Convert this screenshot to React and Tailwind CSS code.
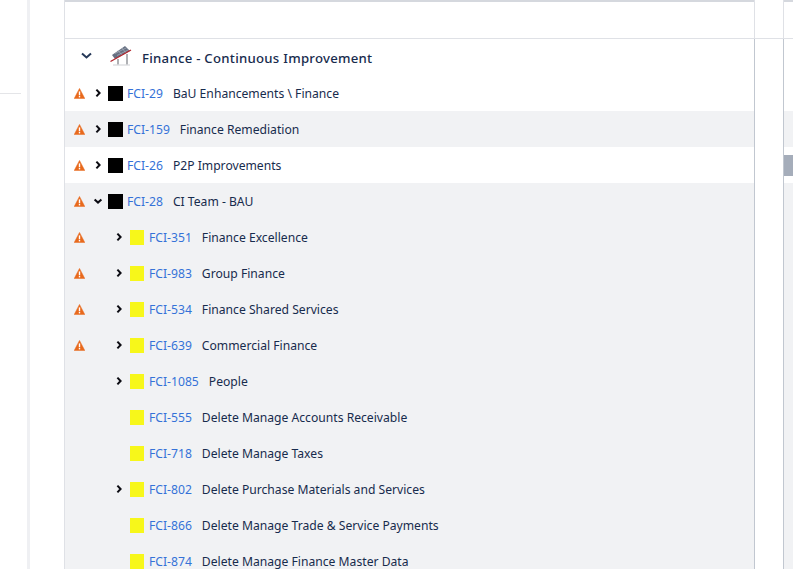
import React from 'react';

const rows = [
  { id: 'FCI-29', name: 'BaU Enhancements \\ Finance', warn: true, open: false, level: 0, bg: 'white' },
  { id: 'FCI-159', name: 'Finance Remediation', warn: true, open: false, level: 0, bg: 'gray' },
  { id: 'FCI-26', name: 'P2P Improvements', warn: true, open: false, level: 0, bg: 'white', mark: true },
  { id: 'FCI-28', name: 'CI Team - BAU', warn: true, open: true, level: 0, bg: 'gray' },
  { id: 'FCI-351', name: 'Finance Excellence', warn: true, level: 1, bg: 'gray' },
  { id: 'FCI-983', name: 'Group Finance', warn: true, level: 1, bg: 'gray' },
  { id: 'FCI-534', name: 'Finance Shared Services', warn: true, level: 1, bg: 'gray' },
  { id: 'FCI-639', name: 'Commercial Finance', warn: true, level: 1, bg: 'gray' },
  { id: 'FCI-1085', name: 'People', level: 1, bg: 'gray' },
  { id: 'FCI-555', name: 'Delete Manage Accounts Receivable', noChevron: true, level: 1, bg: 'gray' },
  { id: 'FCI-718', name: 'Delete Manage Taxes', noChevron: true, level: 1, bg: 'gray' },
  { id: 'FCI-802', name: 'Delete Purchase Materials and Services', level: 1, bg: 'gray' },
  { id: 'FCI-866', name: 'Delete Manage Trade & Service Payments', noChevron: true, level: 1, bg: 'gray' },
  { id: 'FCI-874', name: 'Delete Manage Finance Master Data', noChevron: true, level: 1, bg: 'gray' },
];

const Warning = () => (
  <svg width="11" height="11" viewBox="0 0 11 11">
    <path d="M5.5 0.4 L10.8 10.6 L0.2 10.6 Z" fill="#e8691c" stroke="#e8691c" strokeWidth="0.5" strokeLinejoin="round" />
    <rect x="4.8" y="3.4" width="1.4" height="3.9" fill="#fff" />
    <rect x="4.8" y="8" width="1.4" height="1.4" fill="#fff" />
  </svg>
);

const Chevron = ({ open }) => (
  <svg width="10" height="10" viewBox="0 0 10 10" fill="none" stroke="#0b0b12" strokeWidth="2">
    {open ? <path d="M1.6 3.4 L5 6.6 L8.4 3.4" /> : <path d="M3.4 1.6 L6.6 5 L3.4 8.4" />}
  </svg>
);

const SolarLogo = () => (
  <svg width="22" height="21" viewBox="0 0 22 21">
    <path d="M2 10 L15 1 L20 6 L5 14 Z" fill="#667082" />
    <path d="M5 8.5 L17 2.5 M7 10.5 L19 4.5 M8 5.5 L12 10 M12 3 L16 8" stroke="#a9b0bc" strokeWidth="0.7" />
    <path d="M0.5 16.5 L21 5" stroke="#b3262e" strokeWidth="1.3" />
    <path d="M8 14 L8 20 M17 9 L17 20" stroke="#a7a9ad" strokeWidth="1.8" />
    <path d="M3 20 L20 20" stroke="#dcdde0" strokeWidth="1.4" />
  </svg>
);

const Row = ({ row }) => {
  const bg = row.bg === 'gray' ? 'bg-[#f1f2f4]' : 'bg-white';
  return (
    <div className={`flex h-9 shrink-0 ${bg}`}>
      <div className="flex w-[689px] items-center pl-[9px]">
        <div className="flex w-[15px] shrink-0 items-center">{row.warn && <Warning />}</div>
        <div className={`flex shrink-0 items-center ${row.level === 1 ? 'w-[41px] pl-[25px]' : 'w-[19px] pl-[4px]'}`}>
          {!row.noChevron && <Chevron open={row.open} />}
        </div>
        <div className={`shrink-0 ${row.level === 1 ? 'h-[15px] w-[14px] bg-[#f7f71a]' : 'h-[15px] w-[15px] bg-black'}`} />
        <a className={`pt-[3px] text-[#3572d8] ${row.level === 1 ? 'ml-[5px]' : 'ml-1'}`}>{row.id}</a>
        <span className="ml-[10px] pt-[3px] text-[#172b4d]">{row.name}</span>
      </div>
      <div className="w-[30px] shrink-0 border-x border-[#c1c7d0] bg-white" />
      <div className="flex-1 pt-2">
        {row.mark && <div className="h-[21px] bg-[#a5adba]" />}
      </div>
    </div>
  );
};

export default function App() {
  return (
    <div className="flex h-[569px] w-[793px] overflow-hidden bg-white text-[12.15px] font-['Noto_Sans',sans-serif]">
      <div className="w-[27px] shrink-0 pt-[93px]">
        <div className="mr-[6px] h-px bg-[#e4e5e8]" />
      </div>
      <div className="w-[3px] shrink-0 bg-[#eff0f3]" />
      <div className="w-[34px] shrink-0" />
      <div className="flex min-w-0 flex-1 flex-col border-l border-[#dfe1e6]">
        <div className="flex h-[39px] shrink-0 border-b border-[#dfe1e6]">
          <div className="w-[689px] border-t-2 border-[#d5d8de]" />
          <div className="h-full w-[30px] shrink-0 overflow-hidden border-x border-[#dfe1e6] text-center">
            <div className="-mt-[9px] text-[8px] text-[#6b778c]">0/</div>
          </div>
          <div className="flex-1 border-t-2 border-[#d5d8de]" />
        </div>
        <div className="flex h-9 shrink-0">
          <div className="flex w-[689px] items-center bg-white pl-[16px]">
            <svg className="-mt-0.5" width="11" height="8" viewBox="0 0 11 8" fill="none" stroke="#253858" strokeWidth="2">
              <path d="M1 1.5 L5.5 5.5 L10 1.5" />
            </svg>
            <div className="-mt-1 ml-[18px] shrink-0"><SolarLogo /></div>
            <span className="ml-[10px] pt-1 text-[13.2px] font-medium tracking-[0.26px] text-[#172b4d]">Finance - Continuous Improvement</span>
          </div>
          <div className="w-[30px] shrink-0 border-x border-[#c1c7d0]" />
          <div className="flex-1" />
        </div>
        {rows.map((row) => <Row key={row.id} row={row} />)}
      </div>
    </div>
  );
}
